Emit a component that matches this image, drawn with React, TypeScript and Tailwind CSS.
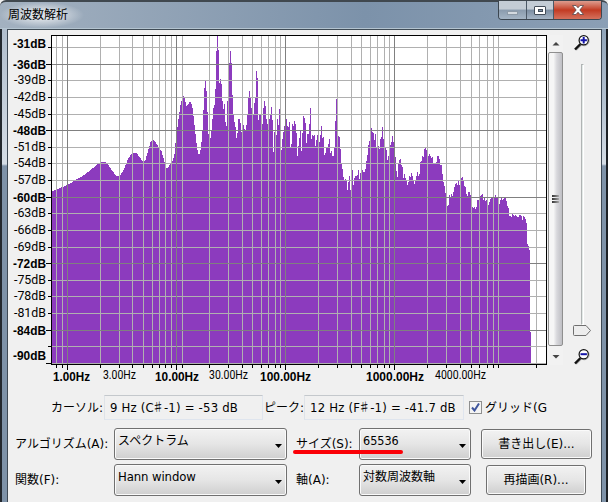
import type { ReactNode } from "react";
import clsx from "clsx";

const PLOT = { left: 52, right: 546, top: 36, bottom: 364 };

// slow part of the spectrum, below 10 Hz: [x, y] points joined by lines
const lowPoints: [number, number][] = [
  [52, 191], [57, 189], [62, 187], [67, 185], [75, 180], [82, 176], [90, 170], [96, 165],
  [101, 162], [105, 162], [108, 165], [112, 171], [116, 176], [119, 176], [123, 170],
  [127, 160], [130, 155], [133, 153], [136, 153], [139, 157], [143, 162], [145, 160],
  [148, 149], [150, 142], [152, 139], [154, 141], [157, 145], [161, 151], [164, 162],
  [166, 168], [168, 167], [170, 163], [172, 161], [174, 154], [175, 143],
];

// one level per pixel column, from x = 176
const levels = [
  136, 127, 119, 112, 105, 101, 98, 96, 98, 102, 106, 105, 104, 102, 102, 104, 108, 116, 125, 134,
  143, 150, 154, 154, 150, 142, 130, 110, 88, 81, 91, 112, 134, 136, 138, 130, 119, 108, 105, 89,
  51, 36, 50, 83, 79, 84, 101, 109, 104, 122, 126, 101, 102, 63, 51, 63, 95, 115, 122, 127,
  138, 133, 119, 119, 123, 132, 130, 125, 129, 130, 125, 114, 98, 91, 98, 108, 115, 115, 103, 98,
  71, 78, 120, 115, 115, 120, 124, 108, 101, 106, 119, 124, 124, 119, 114, 107, 120, 152, 132, 132,
  135, 119, 125, 109, 130, 150, 139, 132, 126, 126, 119, 126, 127, 122, 147, 144, 124, 126, 121, 124,
  133, 156, 146, 138, 131, 151, 133, 116, 118, 123, 143, 134, 134, 124, 108, 139, 135, 136, 135, 146,
  140, 135, 135, 142, 135, 126, 138, 137, 155, 153, 148, 148, 144, 139, 153, 151, 156, 156, 148, 121,
  99, 135, 136, 137, 149, 163, 169, 177, 180, 179, 181, 190, 182, 176, 190, 180, 170, 185, 178, 176,
  176, 175, 170, 179, 173, 173, 170, 172, 172, 169, 161, 155, 145, 141, 134, 128, 132, 133, 140, 134,
  147, 147, 146, 149, 139, 137, 127, 139, 147, 148, 150, 160, 156, 148, 145, 142, 136, 142, 150, 157,
  171, 177, 164, 160, 159, 165, 167, 178, 174, 178, 180, 185, 182, 176, 177, 173, 176, 181, 184, 180,
  176, 172, 176, 174, 162, 161, 156, 157, 149, 148, 150, 155, 156, 154, 156, 158, 157, 163, 163, 163,
  162, 156, 156, 159, 165, 165, 174, 182, 186, 193, 198, 206, 205, 195, 197, 194, 196, 192, 187, 184,
  183, 185, 181, 185, 181, 178, 177, 181, 186, 187, 194, 196, 192, 192, 195, 200, 207, 208, 207, 209,
  207, 200, 200, 198, 196, 195, 194, 200, 198, 201, 200, 202, 205, 202, 199, 198, 197, 196, 197, 195,
  197, 198, 200, 204, 200, 198, 200, 199, 198, 198, 201, 206, 208, 216, 216, 217, 214, 215, 216, 215,
  216, 217, 217, 215, 215, 216, 220, 216, 217, 219, 223, 244, 246, 250, 332,
];

const minorX = [
  56, 62, 100, 119, 132, 143, 152, 159, 165, 171, 182, 209, 228, 242, 252, 261, 268, 275, 280,
  318, 337, 351, 361, 370, 377, 384, 389, 427, 446, 460, 471, 479, 487, 493, 498, 536,
];
const majorX = [67, 176, 285, 394];
const minorY = [47, 80, 97, 114, 147, 163, 180, 213, 230, 247, 280, 296, 313, 346, 363];
const majorY = [64, 130, 197, 263, 330];

const dbLabels = [
  { text: "-31dB", y: 48, bold: true },
  { text: "-36dB", y: 69, bold: true },
  { text: "-39dB", y: 84 },
  { text: "-42dB", y: 101 },
  { text: "-45dB", y: 118 },
  { text: "-48dB", y: 135, bold: true },
  { text: "-51dB", y: 151 },
  { text: "-54dB", y: 167 },
  { text: "-57dB", y: 184 },
  { text: "-60dB", y: 202, bold: true },
  { text: "-63dB", y: 217 },
  { text: "-66dB", y: 234 },
  { text: "-69dB", y: 251 },
  { text: "-72dB", y: 268, bold: true },
  { text: "-75dB", y: 284 },
  { text: "-78dB", y: 300 },
  { text: "-81dB", y: 317 },
  { text: "-84dB", y: 335, bold: true },
  { text: "-90dB", y: 360, bold: true },
];

const hzLabels = [
  { text: "1.00Hz", x: 53, w: 37, bold: true },
  { text: "3.00Hz", x: 103, w: 33 },
  { text: "10.00Hz", x: 155, w: 44, bold: true },
  { text: "30.00Hz", x: 209, w: 39 },
  { text: "100.00Hz", x: 260, w: 51, bold: true },
  { text: "1000.00Hz", x: 366, w: 58, bold: true },
  { text: "4000.00Hz", x: 435, w: 51 },
];

function spectrumPath() {
  let d = `M${PLOT.left} ${PLOT.bottom}`;
  for (let i = 0; i < lowPoints.length - 1; i++) {
    const [x0, y0] = lowPoints[i];
    const [x1, y1] = lowPoints[i + 1];
    for (let x = x0; x < x1; x++) {
      d += `V${Math.round(y0 + ((y1 - y0) * (x - x0)) / (x1 - x0))}H${x + 1}`;
    }
  }
  d += "V143H176";
  levels.forEach((y, i) => {
    d += `V${y}H${177 + i}`;
  });
  return `${d}V${PLOT.bottom}Z`;
}

const boldLabel = "font-['Liberation_Sans'] text-[12px] font-bold";
const thinLabel = "font-['Roboto',sans-serif] text-[12px]";

function SpectrumChart() {
  return (
    <svg viewBox="8 30 540 360" className="block h-[360px] w-[540px] shrink-0">
      <g shapeRendering="crispEdges">
        <rect x="52" y="36" width="494" height="328" fill="#fff" />
        <path d={spectrumPath()} fill="#8c3bbe" />
        {minorX.map((x) => (
          <rect key={x} x={x} y="36" width="1" height="328" fill="#b0b0b0" />
        ))}
        {minorY.map((y) => (
          <rect key={y} x="52" y={y} width="494" height="1" fill="#b0b0b0" />
        ))}
        {majorX.map((x) => (
          <rect key={x} x={x} y="36" width="1" height="328" fill="#808080" />
        ))}
        {majorY.map((y) => (
          <rect key={y} x="52" y={y} width="494" height="1" fill="#808080" />
        ))}
        <path d="M51 35h496v330h-496zM52 36v328h494v-328z" fill="#000" fillRule="evenodd" />
        {/* ticks */}
        {minorY.map((y) => (
          <rect key={y} x={y === 363 ? 46 : 48} y={y} width={y === 363 ? 5 : 3} height="1" />
        ))}
        {majorY.map((y) => (
          <rect key={y} x="46" y={y} width="5" height="1" />
        ))}
        {minorX.map((x) => (
          <rect key={x} x={x} y="365" width="1" height="3" />
        ))}
        {majorX.map((x) => (
          <rect key={x} x={x} y="365" width="1" height="5" />
        ))}
      </g>
      {dbLabels.map((l) => (
        <text
          key={l.text}
          x={l.bold ? 13 : 14}
          y={l.y}
          textLength={l.bold ? 33 : 32}
          lengthAdjust="spacingAndGlyphs"
          className={l.bold ? boldLabel : thinLabel}
        >
          {l.text}
        </text>
      ))}
      {hzLabels.map((l) => (
        <text
          key={l.text}
          x={l.x}
          y={l.bold ? 381 : 379}
          textLength={l.w}
          lengthAdjust="spacingAndGlyphs"
          className={l.bold ? boldLabel : thinLabel}
        >
          {l.text}
        </text>
      ))}
    </svg>
  );
}

function Magnifier({ plus }: { plus?: boolean }) {
  return (
    <svg viewBox="0 0 16 16" className="block size-4">
      <path d="M2 15l6-6" stroke="#bbb" strokeWidth="2" />
      <path d="M1 14.5l6-6" stroke="#111" strokeWidth="2.4" />
      <circle cx="10.3" cy="5.8" r="5" fill="none" stroke="#bbb" />
      <circle cx="9.7" cy="5.2" r="4.6" fill="#fff" stroke="#111" strokeWidth="1.2" />
      <path d={plus ? "M6.5 5.2h6.4M9.7 2v6.4" : "M6.5 5.2h6.4"} stroke="#1414a8" strokeWidth="2" />
    </svg>
  );
}

function ScrollBar() {
  return (
    <div className="flex h-[330px] w-[15px] flex-col items-center bg-[#f2f2f2]">
      <svg viewBox="0 0 15 17" className="block h-[17px] w-[15px]">
        <path d="M4.5 10.5L8 7l3.500 3.500z" fill="#444" />
      </svg>
      <div className="flex w-[15px] flex-1 items-center justify-center rounded-[2px] border border-[#8f8f8f] bg-linear-to-r from-[#f6f6f6] from-35% via-[#d8d8dc] via-60% to-[#bfbfc4]">
        <div className="flex flex-col gap-px">
          <div className="h-[2px] w-[7px] bg-linear-to-r from-[#333] to-[#aaa]" />
          <div className="h-[2px] w-[7px] bg-linear-to-r from-[#333] to-[#aaa]" />
          <div className="h-[2px] w-[7px] bg-linear-to-r from-[#333] to-[#aaa]" />
        </div>
      </div>
      <svg viewBox="0 0 15 19" className="block h-[19px] w-[15px]">
        <path d="M4.500 9L8 12.500L11.500 9z" fill="#444" />
      </svg>
    </div>
  );
}

function ZoomSlider() {
  return (
    <div className="flex w-[18px] flex-col items-center">
      <Magnifier plus />
      <div className="mt-[13px] h-[261px] w-[3px] border border-r-white border-b-white border-l-[#b0b4b4] border-t-[#b0b4b4] bg-[#e4eae8]" />
      <svg viewBox="0 0 18 11" className="block h-[11px] w-[18px]">
        <path
          d="M1.500.500h11.500l4.500 5l-4.500 5h-11.500q-1 0-1-1v-8q0-1 1-1z"
          fill="#ededed"
          stroke="#6f6f6f"
        />
      </svg>
      <div className="mt-[13px]">
        <Magnifier />
      </div>
    </div>
  );
}

function Sharp() {
  return (
    <span className="-ml-[2px] font-['Noto_Sans_CJK_JP',sans-serif] text-[12px] tracking-normal">
      ♯
    </span>
  );
}

function ReadOut({ className, children }: { className?: string; children: ReactNode }) {
  return (
    <div
      className={clsx(
        "h-[25px] shrink-0 border border-t-[#c4c8cc] border-r-[#dfe5ee] border-b-[#dfe5ee] border-l-[#dfe3e8] pl-[5px] font-['DejaVu_Sans_Condensed','DejaVu_Sans',sans-serif] text-[13px] leading-[22px] tracking-[0.2px]",
        className
      )}
    >
      {children}
    </div>
  );
}

function Choice({ className, children }: { className?: string; children: ReactNode }) {
  return (
    <button
      className={clsx(
        "flex h-8 shrink-0 items-start rounded-[3px] border border-[#707070] bg-linear-to-b from-[#f2f2f2] from-0% via-[#e6e6e6] via-48% to-[#cfcfcf] pl-[3px] text-left shadow-[inset_0_0_0_1px_#fafafa]",
        className
      )}
    >
      <span className="leading-[24px]">{children}</span>
      <svg viewBox="0 0 7 4" className="mt-[15px] mr-[4px] ml-auto block h-[4px] w-[7px]">
        <path d="M0 0h7L3.500 4z" />
      </svg>
    </button>
  );
}

function PushButton({ className, children }: { className?: string; children: ReactNode }) {
  return (
    <button
      className={clsx(
        "h-[30px] shrink-0 rounded-[3px] border border-[#707070] bg-linear-to-b from-[#f2f2f2] from-0% via-[#e6e6e6] via-48% to-[#cfcfcf] shadow-[inset_0_0_0_1px_#fafafa]",
        className
      )}
    >
      {children}
    </button>
  );
}

function TitleBar() {
  return (
    <div className="flex h-[29px] shrink-0 justify-between rounded-t-[6px] border-t-2 border-b border-t-[#40484f] border-b-[#b4c4d0] bg-linear-to-r from-[#a3b1c0] from-0% via-[#7c92aa] via-60% to-[#8b9fb5] pr-[6px]">
      <h1 className="bg-[radial-gradient(closest-side,#ffffffa0_30%,transparent)] pr-[16px] pl-[8px] text-[12px] leading-[26px]">
        周波数解析
      </h1>
      <div className="-mt-px flex h-[19px] overflow-hidden rounded-b-[4px] border border-t-0 border-[#3c4650]">
        <div className="flex w-[28px] items-end justify-center border-r border-[#4b5866] bg-linear-to-b from-[#c3ccd5] from-45% via-[#8a9bad] via-50% to-[#a5b5c5] pb-[4px]">
          <div className="h-[4px] w-[11px] border border-[#8d9aa7] bg-[#d4dae0]" />
        </div>
        <div className="flex w-[27px] items-center justify-center border-r border-[#4b5866] bg-linear-to-b from-[#c3ccd5] from-45% via-[#7b8da1] via-50% to-[#a5b5c5]">
          <div className="flex h-[9px] w-[12px] items-center justify-center rounded-[1px] border border-[#434d59] bg-white">
            <div className="h-[3px] w-[5px] border border-[#434d59] bg-[#8093a8]" />
          </div>
        </div>
        <div className="flex w-[47px] items-center justify-center bg-linear-to-b from-[#dc9c8f] from-0% via-[#c23a22] via-50% to-[#d5705c]">
          <svg viewBox="0 0 12 10" className="block h-[10px] w-[12px]">
            <path
              d="M.500.500h3.500l2 2.300l2-2.300h3.500l-3.700 4.500l3.700 4.500h-3.500l-2-2.300l-2 2.300h-3.500l3.700-4.500z"
              fill="#fff"
              stroke="#54484c"
              strokeWidth=".8"
            />
          </svg>
        </div>
      </div>
    </div>
  );
}

export default function App() {
  return (
    <div className="flex h-[502px] w-[608px] flex-col overflow-hidden bg-[#f0f0f0] font-['DejaVu_Sans','Noto_Sans_CJK_JP',sans-serif] text-[12px] text-black">
      <TitleBar />
      <div className="flex min-h-0 flex-1">
        <div className="w-[8px] shrink-0 border-r border-l-2 border-r-[#3d4854] border-l-[#23282e] bg-linear-to-b from-[#b0bdcc] from-0% via-[#d5dde6] via-[135px] to-[#7e92a8] to-[137px]" />

        <div className="flex w-[593px] shrink-0 flex-col border-t border-[#404c56]">
          <div className="flex shrink-0">
            <SpectrumChart />
            <div className="pt-[5px]">
              <ScrollBar />
            </div>
            <div className="pt-[5px] pl-[10px]">
              <ZoomSlider />
            </div>
          </div>

          <div className="mt-[5px] flex h-[25px] items-center whitespace-nowrap">
            <span className="w-[96px] shrink-0 pl-[43px]">カーソル:</span>
            <ReadOut className="w-[159px]">
              9 Hz (C
              <Sharp />
              -1) = -53 dB
            </ReadOut>
            <span className="w-[41px] shrink-0 pl-px">ピーク:</span>
            <ReadOut className="w-[160px]">
              12 Hz (F
              <Sharp />
              -1) = -41.7 dB
            </ReadOut>
            <span className="ml-[5px] flex size-[13px] shrink-0 items-center justify-center border border-[#8e8f8f] bg-[#f4f4f4]">
              <svg viewBox="0 0 9 9" className="block size-[9px]">
                <path d="M1 4.500l2.500 3L8 .500" fill="none" stroke="#3f559c" strokeWidth="2" />
              </svg>
            </span>
            <span className="ml-[3px]">グリッド(G</span>
          </div>

          <div className="relative mt-[8px] flex h-8 items-center whitespace-nowrap">
            <span className="w-[106px] shrink-0 pl-[7px]">アルゴリズム(A):</span>
            <Choice className="w-[173px]">スペクトラム</Choice>
            <span className="w-[72px] shrink-0 pl-[9px]">サイズ(S):</span>
            <Choice className="w-[112px] font-['DejaVu_Sans_Condensed','DejaVu_Sans',sans-serif] text-[12.5px]">
              65536
            </Choice>
            <PushButton className="ml-[10px] w-[111px]">書き出し(E)...</PushButton>
            {/* hand-drawn marker under the size field */}
            <div className="absolute top-[22px] left-[285px] h-[4px] w-[110px] rounded-full bg-[#fb0007]" />
          </div>

          <div className="mt-[4px] flex h-8 items-center whitespace-nowrap">
            <span className="w-[106px] shrink-0 pl-[7px]">関数(F):</span>
            <Choice className="w-[173px] font-['DejaVu_Sans_Condensed','DejaVu_Sans',sans-serif] text-[13px] tracking-[-0.1px]">
              Hann window
            </Choice>
            <span className="w-[72px] shrink-0 pl-[9px]">軸(A):</span>
            <Choice className="w-[112px]">対数周波数軸</Choice>
            <PushButton className="ml-[15px] w-[100px]">再描画(R)...</PushButton>
          </div>
        </div>

        <div className="w-[7px] shrink-0 border-r-2 border-l border-r-[#1d2126] border-l-[#3d4854] bg-linear-to-b from-[#8fa3b8] from-0% via-[#d5dde6] via-[135px] to-[#7e92a8] to-[137px]" />
      </div>
    </div>
  );
}
